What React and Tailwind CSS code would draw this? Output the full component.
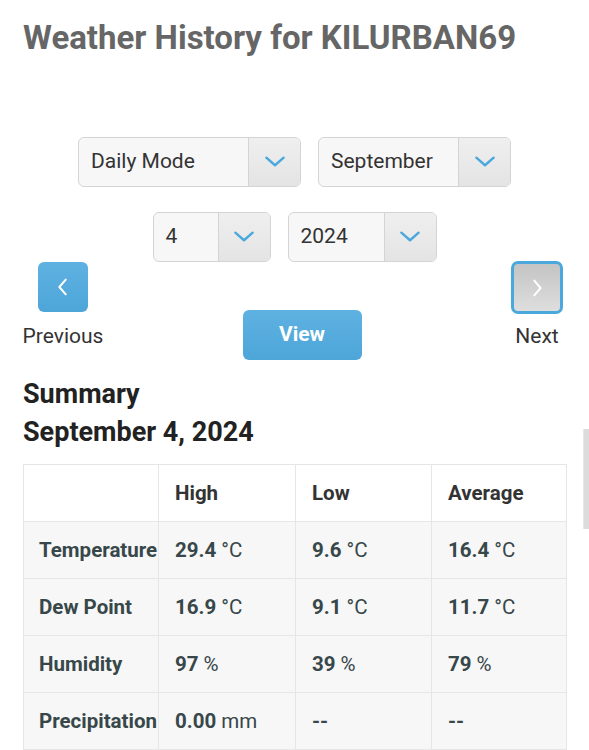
import React from 'react';

const Chevron = ({ dir = 'down', className = '' }) => {
  const paths = {
    down: 'M4 8 L12 15 L20 8',
    left: 'M15 4 L8 12 L15 20',
    right: 'M9 4 L16 12 L9 20',
  };
  return (
    <svg viewBox="0 0 24 24" className={className} fill="none" stroke="currentColor" strokeWidth="2.2" strokeLinecap="round" strokeLinejoin="round">
      <path d={paths[dir]} />
    </svg>
  );
};

const Select = ({ value, width, arrow = 52 }) => (
  <div
    className="flex h-[50px] rounded-[6px] border border-[#d4d4d4] bg-[#f7f7f7] overflow-hidden"
    style={{ width }}
  >
    <div className="flex-1 flex items-center pl-[12px] text-[21px] text-[#333]">{value}</div>
    <div
      className="flex items-center justify-center border-l border-[#d4d4d4] bg-gradient-to-b from-[#efefef] to-[#e4e4e4] text-[#4aa8dc]"
      style={{ width: arrow }}
    >
      <Chevron dir="down" className="w-[26px] h-[26px]" />
    </div>
  </div>
);

const rows = [
  { label: 'Temperature', cells: [['29.4', '°C'], ['9.6', '°C'], ['16.4', '°C']] },
  { label: 'Dew Point', cells: [['16.9', '°C'], ['9.1', '°C'], ['11.7', '°C']] },
  { label: 'Humidity', cells: [['97', '%'], ['39', '%'], ['79', '%']] },
  { label: 'Precipitation', cells: [['0.00', 'mm'], ['--', ''], ['--', '']] },
];

const cols = 'grid grid-cols-[134px_137px_136px_135px]';

export default function App() {
  return (
    <div className="relative min-h-[750px] bg-white px-[23px] text-[#333]" style={{ fontFamily: 'Roboto, "Liberation Sans", sans-serif' }}>
      <h1 className="pt-[16px] text-[33px] leading-[44px] font-bold text-[#666]">Weather History for KILURBAN69</h1>

      <div className="mt-[77px] flex justify-center gap-[17px]">
        <Select value="Daily Mode" width={223} />
        <Select value="September" width={193} />
      </div>
      <div className="mt-[25px] flex justify-center gap-[17px]">
        <Select value="4" width={118} />
        <Select value="2024" width={149} />
      </div>

      <div className="flex justify-between items-start">
        <div className="flex flex-col items-center w-[80px]">
          <button className="w-[50px] h-[50px] rounded-[6px] bg-gradient-to-b from-[#5eb2e2] to-[#4da5d8] flex items-center justify-center text-white">
            <Chevron dir="left" className="w-[22px] h-[22px]" />
          </button>
          <div className="mt-[10px] text-[21px] leading-[28px] text-[#333]">Previous</div>
        </div>
        <button className="mt-[48px] mr-[10px] w-[119px] h-[50px] rounded-[6px] bg-gradient-to-b from-[#5eb2e2] to-[#4da5d8] text-white text-[21px] font-bold">
          View
        </button>
        <div className="flex flex-col items-center w-[52px] mr-[3px] -mt-[1px]">
          <button className="w-[52px] h-[53px] rounded-[7px] border-[3px] border-[#4aa8dc] bg-gradient-to-b from-[#c4c4c4] to-[#dedede] flex items-center justify-center text-white">
            <Chevron dir="right" className="w-[22px] h-[22px]" />
          </button>
          <div className="mt-[8px] text-[21px] leading-[28px] text-[#333]">Next</div>
        </div>
      </div>

      <h2 className="mt-[15px] text-[27px] leading-[38px] font-bold text-[#222]">Summary</h2>
      <h2 className="text-[27px] leading-[38px] font-bold text-[#222]">September 4, 2024</h2>

      <div className="mt-[13px] w-[544px] border border-[#e6e6e6]">
        <div className={`${cols} h-[56px] bg-white`}>
          <div />
          {['High', 'Low', 'Average'].map((h) => (
            <div key={h} className="border-l border-[#e6e6e6] flex items-center pl-[16px] text-[20.5px] font-bold text-[#333]">{h}</div>
          ))}
        </div>
        {rows.map((r) => (
          <div key={r.label} className={`${cols} h-[57px] bg-[#f7f7f7] border-t border-[#e6e6e6]`}>
            <div className="flex items-center pl-[15px] text-[20.5px] font-bold text-[#37474a] whitespace-nowrap overflow-hidden">{r.label}</div>
            {r.cells.map(([v, u], i) => (
              <div key={i} className="border-l border-[#e6e6e6] flex items-center pl-[16px] text-[20.5px] text-[#37474a] whitespace-nowrap">
                <span className="font-bold">{v}</span>
                {u && <span className="ml-[5px]">{u}</span>}
              </div>
            ))}
          </div>
        ))}
      </div>

      <div className="absolute right-0 top-[429px] w-[6px] h-[100px] bg-[#dcdcdc] border-l border-[#e8e8e8]" />
    </div>
  );
}
